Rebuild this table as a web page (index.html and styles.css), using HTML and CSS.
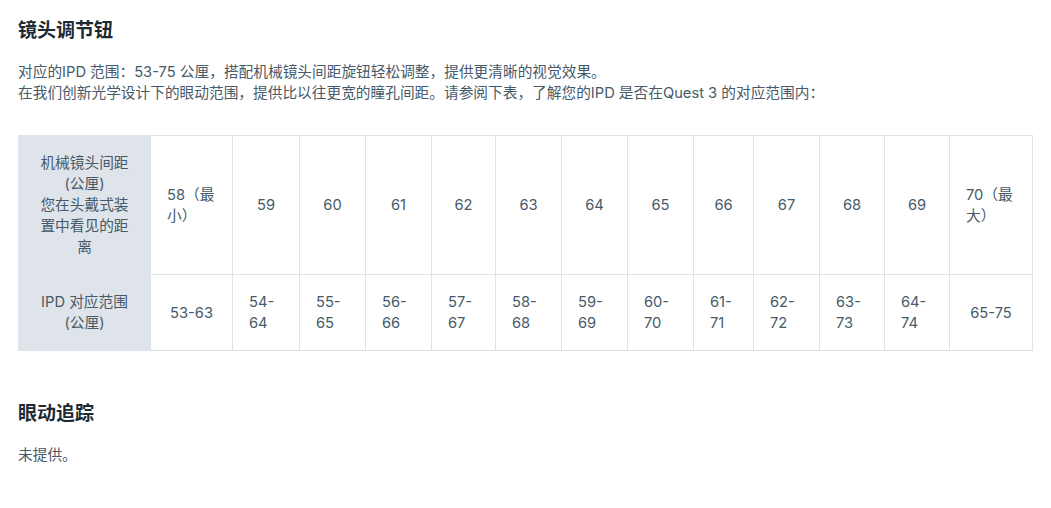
FILE: index.html
```html
<!DOCTYPE html>
<html lang="zh-CN">
    <head>
        <meta charset="UTF-8" />
        <meta name="viewport" content="width=device-width, initial-scale=1.0" />
        <title>镜头调节钮</title>
        <link rel="stylesheet" href="styles.css">
    </head>
    <body>
        <div class="page">
            <section class="spec">
                <h2 class="spec-title">镜头调节钮</h2>
                <p class="spec-text">
                    对应的IPD 范围：53-75 公厘，搭配机械镜头间距旋钮轻松调整，提供更清晰的视觉效果。<br>
                    在我们创新光学设计下的眼动范围，提供比以往更宽的瞳孔间距。请参阅下表，了解您的IPD 是否在Quest 3 的对应范围内：
                </p>

                <table class="ipd-table">
                    <colgroup>
                        <col style="width: 132px">
                        <col style="width: 82px">
                        <col style="width: 67px">
                        <col style="width: 66px">
                        <col style="width: 66px">
                        <col style="width: 64px">
                        <col style="width: 66px">
                        <col style="width: 66px">
                        <col style="width: 66px">
                        <col style="width: 60px">
                        <col style="width: 66px">
                        <col style="width: 65px">
                        <col style="width: 65px">
                        <col style="width: 83px">
                    </colgroup>
                    <tr>
                        <th>机械镜头间距<br>(公厘)<br>您在头戴式装置中看见的距离</th>
                        <td><span>58（最小）</span></td>
                        <td><span>59</span></td>
                        <td><span>60</span></td>
                        <td><span>61</span></td>
                        <td><span>62</span></td>
                        <td><span>63</span></td>
                        <td><span>64</span></td>
                        <td><span>65</span></td>
                        <td><span>66</span></td>
                        <td><span>67</span></td>
                        <td><span>68</span></td>
                        <td><span>69</span></td>
                        <td><span>70（最大）</span></td>
                    </tr>
                    <tr>
                        <th>IPD 对应范围<br>(公厘)</th>
                        <td><span>53-63</span></td>
                        <td><span>54-64</span></td>
                        <td><span>55-65</span></td>
                        <td><span>56-66</span></td>
                        <td><span>57-67</span></td>
                        <td><span>58-68</span></td>
                        <td><span>59-69</span></td>
                        <td><span>60-70</span></td>
                        <td><span>61-71</span></td>
                        <td><span>62-72</span></td>
                        <td><span>63-73</span></td>
                        <td><span>64-74</span></td>
                        <td><span>65-75</span></td>
                    </tr>
                </table>
            </section>

            <section class="spec">
                <h2 class="spec-title">眼动追踪</h2>
                <p class="spec-text">未提供。</p>
            </section>
        </div>
    </body>
</html>
```

FILE: styles.css
```css
body {
    margin: 0;
    background-color: #fff;
    font-family: Inter, "Noto Sans CJK SC", sans-serif;
    color: #465a69;
}

.page {
    padding: 18px 19px 40px 18px;
}

.spec + .spec {
    margin-top: 50px;
}

.spec-title {
    margin: 0;
    font-size: 19px;
    line-height: 26px;
    font-weight: bold;
    color: #1c2b33;
}

.spec-text {
    margin: 18px 0 0;
    font-size: 14.7px;
    line-height: 21px;
}

.ipd-table {
    margin-top: 31px;
    width: 1014px;
    table-layout: fixed;
    border-collapse: collapse;
    font-size: 14.7px;
    line-height: 21px;
}

.ipd-table th,
.ipd-table td {
    padding: 17px 16px 16px;
    border: 1px solid #dee3e9;
    text-align: center;
    vertical-align: middle;
}

.ipd-table th {
    background-color: #dfe3ea;
    font-weight: normal;
    border-color: #dfe3ea;
}

.ipd-table td span {
    display: inline-block;
    text-align: left;
}
```
